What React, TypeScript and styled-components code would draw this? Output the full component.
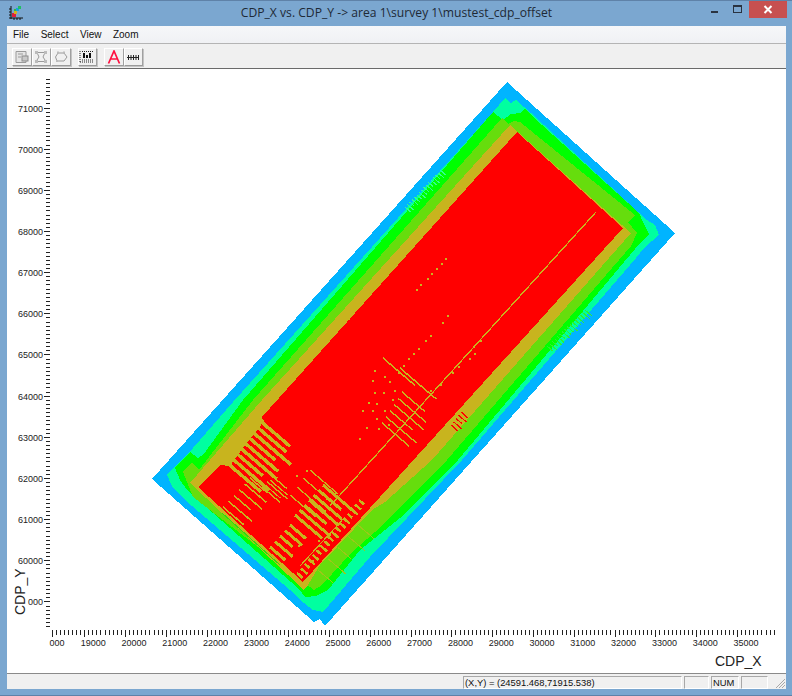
import React from "react";
import styled, { createGlobalStyle } from "styled-components";

const Global = createGlobalStyle`
  html, body { margin: 0; padding: 0; background: #7ba7d0; }
  #root { width: 792px; height: 696px; overflow: hidden; }
`;

const Frame = styled.div`
  box-sizing: border-box;
  width: 792px;
  height: 696px;
  display: flex;
  flex-direction: column;
  padding: 0 6px 6px 7px;
  background: #7ba7d0;
  border: 1px solid #5f82a8;
  border-width: 1px 0 1px 0;
`;

const TitleBar = styled.header`
  height: 25px;
  flex: none;
  display: grid;
  grid-template-columns: 120px 1fr 120px;
  align-items: start;
`;

const AppIcon = styled.svg`
  display: block;
  width: 16px;
  height: 16px;
  margin-top: 4px;
  margin-left: 1px;
`;

const Title = styled.h1`
  margin: 4px 0 0;
  font: 400 12.15px/16px "Open Sans", "Noto Sans", sans-serif;
  color: #1e2a36;
  text-align: center;
  white-space: nowrap;
`;

const Controls = styled.div`
  display: flex;
  justify-content: flex-end;
  margin-right: -1px;
`;

const Ctl = styled.div`
  width: 23px;
  height: 17px;
  display: flex;
  align-items: center;
  justify-content: center;
`;

const CloseBtn = styled.div`
  width: 38px;
  height: 17px;
  background: #c75050;
  display: flex;
  align-items: center;
  justify-content: center;
`;

const Menu = styled.nav`
  height: 17px;
  flex: none;
  display: flex;
  gap: 11.5px;
  padding-left: 6px;
  background: linear-gradient(#f6f7f9, #f0f1f4);
  border-bottom: 1px solid #b4b4b4;
  font: 400 10px/18px "Liberation Sans", Arial, sans-serif;
  color: #111;
`;

const MenuItem = styled.span`
  display: block;
`;

const Toolbar = styled.div`
  flex: none;
  display: flex;
  align-items: flex-start;
  padding: 4px 0 0 5px;
  box-sizing: border-box;
  height: 25px;
  background: #f0f0f0;
  border-bottom: 1px solid #6a6a6a;
`;

const Tool = styled.button<{ $gap?: number }>`
  box-sizing: border-box;
  width: 19.5px;
  height: 18px;
  padding: 0;
  margin-left: ${(p) => p.$gap ?? 0}px;
  background: #f0f0f0;
  border: 1px solid;
  border-color: #fff #a0a0a0 #9a9a9a #fff;
  box-shadow: 1px 1px 0 #c4c4c4;
  display: flex;
  align-items: center;
  justify-content: center;
`;

const ToolIcon = styled.svg`
  display: block;
  width: 16px;
  height: 14px;
`;

const Canvas = styled.main`
  flex: 1;
  min-height: 0;
  background: #fff;
`;

const Chart = styled.svg`
  display: block;
  width: 778px;
  height: 604px;
`;

const Status = styled.footer`
  height: 16px;
  flex: none;
  box-sizing: border-box;
  display: flex;
  gap: 2px;
  padding: 2px 0 0 456px;
  background: #f0f0f0;
  border-top: 1px solid #8a8a8a;
  position: relative;
  font: 400 9.4px/13px "Liberation Sans", Arial, sans-serif;
  color: #111;
`;

const Pane = styled.div<{ $w: number }>`
  box-sizing: border-box;
  width: ${(p) => p.$w}px;
  height: 13px;
  padding-left: 1px;
  border: 1px solid;
  border-color: #a8a8a8 #fff #fff #a8a8a8;
  line-height: 12px;
  white-space: nowrap;
`;

const Grip = styled.svg`
  position: absolute;
  right: 0;
  bottom: 0;
  width: 13px;
  height: 13px;
`;

const C = { blue: "#00b4ff", cyan: "#00ffa0", green: "#00ff00", yg: "#66dd0d", olive: "#c8b41e", red: "#ff0000" };

const LAYERS: [string, string][] = [
  [C.blue, "507,82 675,233 325,626 320,619 314,622 152,479"],
  [C.cyan, "493,112 505,98 511,103 516,100 531,113 638,212 647,220 655,225 659,235 645,247 636,258 462,460 370,557 323,612 313,610 300,600 290,590 185,500 172,486 167,475 193,448 233,402"],
  [C.green, "493,112 503,120 511,114 520,113 525,108 531,115 639,213 643,222 649,234 640,243 458,460 400,518 360,550 328,590 316,596 305,597 300,590 187,490 180,480 175,468 190,452 198,458 203,455 243,400"],
  [C.yg, "502,118 508,124 514,121 520,122 635,215 628,222 637,233 631,246 447,460 375,532 352,552 322,585 314,590 310,587 193,497 183,472 192,462 199,470 253,400"],
  [C.olive, "510,125 631,233 432,460 385,502 372,510 320,565 308,585 303,590 288,575 190,483 262,400"],
  [C.red, "517,132 623,228 380,497 303,582 198,487 220,465 262,417"],
  [C.olive, "220,465 238,444 260,417 264,421 240,452 230,466"],
];

type Seg = [number, number, number, number, number];

function family(x0: number, y0: number, x1: number, y1: number, n: number, len: number, w: number): Seg[] {
  const out: Seg[] = [];
  for (let i = 0; i < n; i++) {
    const t = n === 1 ? 0 : i / (n - 1);
    const x = x0 + (x1 - x0) * t;
    const y = y0 + (y1 - y0) * t;
    const l = len * (0.85 + 0.15 * Math.sin(i * 2.3));
    out.push([x, y, x + l * 0.76, y + l * 0.65, w]);
  }
  return out;
}

const HATCH: Seg[] = [
  ...family(226, 462, 258, 419, 9, 54, 3.4),
  ...family(223, 507, 250, 478, 6, 32, 1.6),
  ...family(262, 487, 272, 476, 3, 28, 1.4),
  ...family(270, 547, 290, 525, 5, 24, 3),
  ...family(295, 515, 323, 485, 7, 42, 3),
  ...family(290, 495, 310, 470, 4, 40, 1.3),
  ...family(265, 485, 270, 480, 2, 24, 1.2),
  ...family(297, 573, 359, 500, 17, 9, 2.5),
  ...family(383, 358, 400, 368, 2, 50, 1.5),
  ...family(382, 423, 402, 392, 6, 42, 1.4),
];

const PALE_LINES: Seg[] = family(318, 570, 358, 525, 5, 24, 1);

const LINES: Seg[] = [
  [596, 212, 330, 506, 1.3],
  [345, 517, 300, 566, 1.1],
];

const DOTS: [number, number][] = [
  [447,315],[442,322],[430,335],[425,340],[418,348],[413,353],[408,358],[403,365],[398,372],
  [374,370],[372,380],[374,392],[368,402],[376,403],[384,376],[389,381],[383,392],[394,390],[362,410],
  [376,418],[384,410],[392,399],[378,428],[359,438],[372,410],[388,424],[366,427],
  [345,313],[350,309],[355,305],[360,300],[342,316],[348,318],[344,310],[352,313],[358,304],
  [416,289],[420,284],[427,278],[431,273],[436,268],[441,263],[445,258],
  [469,358],[474,353],[458,366],[452,372],[440,384],[430,390],[473,346],[480,340],
  [312,560],[318,540],[298,545],[326,498],[335,492],[296,475],[306,470],
];

const SIDE: Seg[] = family(451, 425, 461, 412, 5, 11, 1.2);

const PALE: Seg[] = [
  ...family(405, 207, 440, 170, 16, 9, 1),
  ...family(547, 346, 585, 310, 16, 10, 1),
];

const yTicks = Array.from({ length: 134 }, (_, i) => i);
const xTicks = Array.from({ length: 178 }, (_, i) => i);
const Y0 = 108 - 41.16 * 0.7;
const X0 = 52;

const yLabels = ["71000","70000","69000","68000","67000","66000","65000","64000","63000","62000","61000","60000","000"];
const xLabels = ["000","19000","20000","21000","22000","23000","24000","25000","26000","27000","28000","29000","30000","31000","32000","33000","34000","35000"];

const labelStyle = { fontFamily: '"Liberation Sans", Arial, sans-serif', fill: "#222" };

export default function App() {
  return (
    <>
      <Global />
      <Frame>
        <TitleBar>
          <AppIcon viewBox="0 0 16 16">
            <path d="M3 1v13M1 13h14M1 4h2M1 7h2M1 10h2M6 13v2M9 13v2M12 13v2" stroke="#111" strokeWidth="1" fill="none" />
            <rect x="4" y="8" width="4" height="4" fill="#e0203a" />
            <rect x="6" y="6" width="3" height="3" fill="#d8b020" />
            <rect x="8" y="3" width="3" height="3" fill="#18a0e0" />
            <rect x="10" y="1" width="3" height="3" fill="#20c060" />
            <rect x="6" y="4" width="2" height="2" fill="#30c040" />
          </AppIcon>
          <Title>CDP_X vs. CDP_Y -&gt; area 1\survey 1\mustest_cdp_offset</Title>
          <Controls>
            <Ctl>
              <svg width="9" height="9" viewBox="0 0 9 9"><rect x="1" y="6" width="7" height="2" fill="#2a3340" /></svg>
            </Ctl>
            <Ctl>
              <svg width="10" height="9" viewBox="0 0 10 9"><rect x="0.5" y="0.5" width="8" height="7" fill="none" stroke="#2a3340" /><rect x="0" y="0" width="9" height="2" fill="#2a3340" /></svg>
            </Ctl>
            <CloseBtn>
              <svg width="10" height="9" viewBox="0 0 10 9"><path d="M1.5 1l7 7M8.5 1l-7 7" stroke="#fff" strokeWidth="2" /></svg>
            </CloseBtn>
          </Controls>
        </TitleBar>
        <Menu>
          <MenuItem>File</MenuItem>
          <MenuItem>Select</MenuItem>
          <MenuItem>View</MenuItem>
          <MenuItem>Zoom</MenuItem>
        </Menu>
        <Toolbar>
          <Tool>
            <ToolIcon viewBox="0 0 16 14">
              <path d="M2 1.5h10v11H2z" fill="#e4e4e4" stroke="#9a9a9a" />
              <path d="M4 4h5M4 7h3" stroke="#9a9a9a" />
              <rect x="8" y="6" width="6" height="5" fill="#c8c8c8" stroke="#8c8c8c" />
            </ToolIcon>
          </Tool>
          <Tool>
            <ToolIcon viewBox="0 0 16 14">
              <path d="M4 2.5h8L10 7l3 4.5H3L6 7z" fill="none" stroke="#9a9a9a" />
              <path d="M2 1h3v3H2zM11 1h3v3h-3zM2 10h3v3H2zM11 10h3v3h-3z" fill="#bbb" />
            </ToolIcon>
          </Tool>
          <Tool>
            <ToolIcon viewBox="0 0 16 14">
              <path d="M5 3h6l3 4-3 4H4L2.5 7z" fill="none" stroke="#9a9a9a" />
              <path d="M4 1.5h2v2H4zM10 1.5h2v2h-2zM3 10h2v2H3z" fill="#bbb" />
            </ToolIcon>
          </Tool>
          <Tool $gap={7}>
            <ToolIcon viewBox="0 0 16 14">
              <path d="M1 1v11M1 12h14" stroke="#222" strokeDasharray="1 1" fill="none" />
              <rect x="4" y="3" width="2" height="5" fill="#111" />
              <rect x="7" y="5" width="2" height="3" fill="#111" />
              <rect x="10" y="3" width="2" height="5" fill="#111" />
              <path d="M3 10h11M3 1.5h11" stroke="#222" strokeDasharray="1 1" />
            </ToolIcon>
          </Tool>
          <Tool $gap={7}>
            <ToolIcon viewBox="0 0 16 14">
              <path d="M2.5 13.5L8 1l5.5 12.5M4.5 9h7" fill="none" stroke="#ff1040" strokeWidth="1.7" />
            </ToolIcon>
          </Tool>
          <Tool>
            <ToolIcon viewBox="0 0 16 14">
              <path d="M2 7.5h12M3.5 5v5M6 5v5M8.5 5v5M11 5v5M13.5 5v5" stroke="#222" fill="none" />
            </ToolIcon>
          </Tool>
        </Toolbar>
        <Canvas>
          <Chart viewBox="7 69 778 604">
            <g shapeRendering="crispEdges">
              {LAYERS.map(([f, p], i) => (
                <polygon key={i} points={p} fill={f} />
              ))}
              {PALE.map(([a, b, c, d, w], i) => (
                <line key={i} x1={a} y1={b} x2={c} y2={d} stroke={i < 16 ? "#30ff90" : "#30ee30"} strokeWidth={w} />
              ))}
              {PALE_LINES.map(([a, b, c, d, w], i) => (
                <line key={i} x1={a} y1={b} x2={c} y2={d} stroke="#9cc818" strokeWidth={w} />
              ))}
              {HATCH.map(([a, b, c, d, w], i) => (
                <line key={i} x1={a} y1={b} x2={c} y2={d} stroke={C.olive} strokeWidth={w} />
              ))}
              {LINES.map(([a, b, c, d, w], i) => (
                <line key={i} x1={a} y1={b} x2={c} y2={d} stroke={C.olive} strokeWidth={w} />
              ))}
              {SIDE.map(([a, b, c, d, w], i) => (
                <line key={i} x1={a} y1={b} x2={c} y2={d} stroke={C.red} strokeWidth={w} />
              ))}
              {DOTS.map(([x, y], i) => (
                <rect key={i} x={x} y={y} width={2} height={2} fill={C.olive} />
              ))}
              <path d="M222 513L280 565" stroke="#28e010" strokeWidth="1" fill="none" />
              {yTicks.map((i) => {
                const y = Y0 + i * 4.116;
                return <line key={i} x1={(i + 3) % 10 === 0 ? 44 : 46} x2={50} y1={y} y2={y} stroke="#222" strokeWidth={1} />;
              })}
              {xTicks.map((i) => {
                const x = X0 + i * 4.08;
                return <line key={i} x1={x} x2={x} y1={630} y2={(i + 2) % 10 === 0 || i === 0 ? 637 : 635} stroke="#222" strokeWidth={1} />;
              })}
            </g>
            {yLabels.map((t, i) => (
              <text key={t} x={43} y={111.5 + i * 41.16} textAnchor="end" fontSize={9} style={labelStyle}>{t}</text>
            ))}
            {xLabels.map((t, i) => (
              <text key={t} x={i === 0 ? 57 : 52.4 + i * 40.8} y={646} textAnchor="middle" fontSize={9} style={labelStyle}>{t}</text>
            ))}
            <text x={715} y={666} fontSize={14} style={labelStyle}>CDP_X</text>
            <text transform="translate(25 615) rotate(-90)" fontSize={14} style={labelStyle}>CDP_Y</text>
          </Chart>
        </Canvas>
        <Status>
          <Pane $w={219}>(X,Y) = (24591.468,71915.538)</Pane>
          <Pane $w={25} />
          <Pane $w={28}>NUM</Pane>
          <Pane $w={27} />
          <Grip viewBox="0 0 13 13">
            <path d="M12 3L3 12M12 6L6 12M12 9L9 12" stroke="#a8a8a8" fill="none" />
          </Grip>
        </Status>
      </Frame>
    </>
  );
}
